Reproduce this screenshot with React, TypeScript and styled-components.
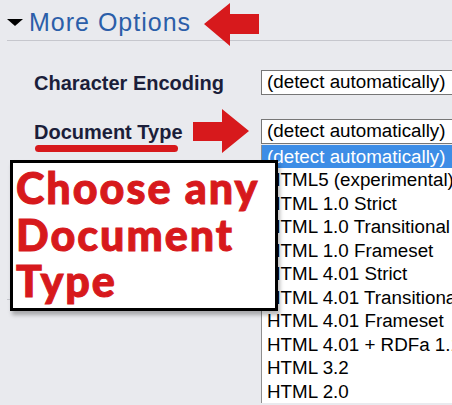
import React from "react";
import styled, { createGlobalStyle } from "styled-components";

const Global = createGlobalStyle`
  html, body { margin: 0; padding: 0; background: #e9eaee; }
  body { font-family: "Liberation Sans", Arial, sans-serif; }
`;

const Page = styled.div`
  position: relative;
  width: 452px;
  height: 405px;
  overflow: hidden;
  padding: 0 0 0 7px;
  box-sizing: border-box;
  background: #e9eaee;
`;

const Header = styled.div`
  display: flex;
  align-items: center;
  gap: 6px;
  height: 41px;
  padding-top: 3px;
  box-sizing: border-box;
  border-bottom: 1px solid #c6c7cd;
`;

const Caret = styled.span`
  width: 0;
  height: 0;
  border-left: 8.5px solid transparent;
  border-right: 8.5px solid transparent;
  border-top: 7px solid #000;
  margin-top: 2px;
`;

const Title = styled.span`
  font-size: 25px;
  letter-spacing: 1px;
  line-height: 28px;
  color: #2b5ea9;
`;

const Options = styled.div`
  display: flex;
  flex-direction: column;
  gap: 23px;
  height: 259px;
  box-sizing: border-box;
  padding: 28px 0 0 27px;
  border-bottom: 1px solid #c6c7cd;
`;

const Row = styled.div`
  display: grid;
  grid-template-columns: 227px 220px;
  align-items: center;
`;

const Label = styled.span`
  font-size: 20px;
  font-weight: 700;
  color: #1b1e3a;
  padding-top: 3px;
`;

const SelectWrap = styled.div`
  position: relative;
`;

const Select = styled.div`
  height: 25px;
  box-sizing: border-box;
  border: 1px solid #767676;
  background: #fff;
  padding-left: 5px;
  font-size: 18.8px;
  line-height: 22px;
  color: #000;
  white-space: nowrap;
`;

const List = styled.div`
  position: absolute;
  top: 26px;
  left: 0;
  width: 100%;
  background: #fff;
  border-left: 1px solid #8f8f8f;
  box-sizing: border-box;
  z-index: 2;
`;

const Item = styled.div<{ $active?: boolean }>`
  height: 23.5px;
  line-height: 23.5px;
  padding-left: 5px;
  font-size: 18.8px;
  white-space: nowrap;
  color: ${(p) => (p.$active ? "#fff" : "#000")};
  background: ${(p) => (p.$active ? "#3d8de6" : "#fff")};
`;

const Callout = styled.div`
  position: absolute;
  left: 10px;
  top: 160px;
  width: 268px;
  height: 151px;
  box-sizing: border-box;
  border: 3px solid #000;
  background: #fff;
  box-shadow: 2px 4px 4px rgba(0, 0, 0, 0.28);
  padding: 2px 0 0 3px;
  font-family: Lato, "Liberation Sans", sans-serif;
  font-weight: 900;
  font-size: 43px;
  letter-spacing: 2px;
  -webkit-text-stroke: 1px #d7191c;
  line-height: 46.5px;
  color: #d7191c;
  white-space: nowrap;
  z-index: 3;
`;

const Underline = styled.div`
  position: absolute;
  left: 35px;
  top: 145px;
  width: 143px;
  height: 7px;
  border-radius: 4px;
  background: #d7191c;
`;

const Arrow = styled.svg<{ $left: number; $top: number }>`
  position: absolute;
  left: ${(p) => p.$left}px;
  top: ${(p) => p.$top}px;
  z-index: 4;
`;

const items = [
  "(detect automatically)",
  "HTML5 (experimental)",
  "HTML 1.0 Strict",
  "HTML 1.0 Transitional",
  "HTML 1.0 Frameset",
  "HTML 4.01 Strict",
  "HTML 4.01 Transitional",
  "HTML 4.01 Frameset",
  "HTML 4.01 + RDFa 1.1",
  "HTML 3.2",
  "HTML 2.0",
];

export default function App() {
  return (
    <>
      <Global />
      <Page>
        <Header>
          <Caret />
          <Title>More Options</Title>
        </Header>
        <Options>
          <Row>
            <Label>Character Encoding</Label>
            <Select>(detect automatically)</Select>
          </Row>
          <Row>
            <Label>Document Type</Label>
            <SelectWrap>
              <Select>(detect automatically)</Select>
              <List>
                {items.map((t, i) => (
                  <Item key={t} $active={i === 0}>
                    {t}
                  </Item>
                ))}
              </List>
            </SelectWrap>
          </Row>
        </Options>
        <Underline />
        <Arrow $left={204} $top={3} width="56" height="44" viewBox="0 0 56 44">
          <polygon points="0,21 26,0 26,11 55,11 55,31 26,31 26,43" fill="#d7191c" />
        </Arrow>
        <Arrow $left={193} $top={109} width="57" height="45" viewBox="0 0 57 45">
          <polygon points="0,13 29,13 29,0 56,22 29,44 29,32 0,32" fill="#d7191c" />
        </Arrow>
        <Callout>
          Choose any
          <br />
          Document
          <br />
          Type
        </Callout>
      </Page>
    </>
  );
}
